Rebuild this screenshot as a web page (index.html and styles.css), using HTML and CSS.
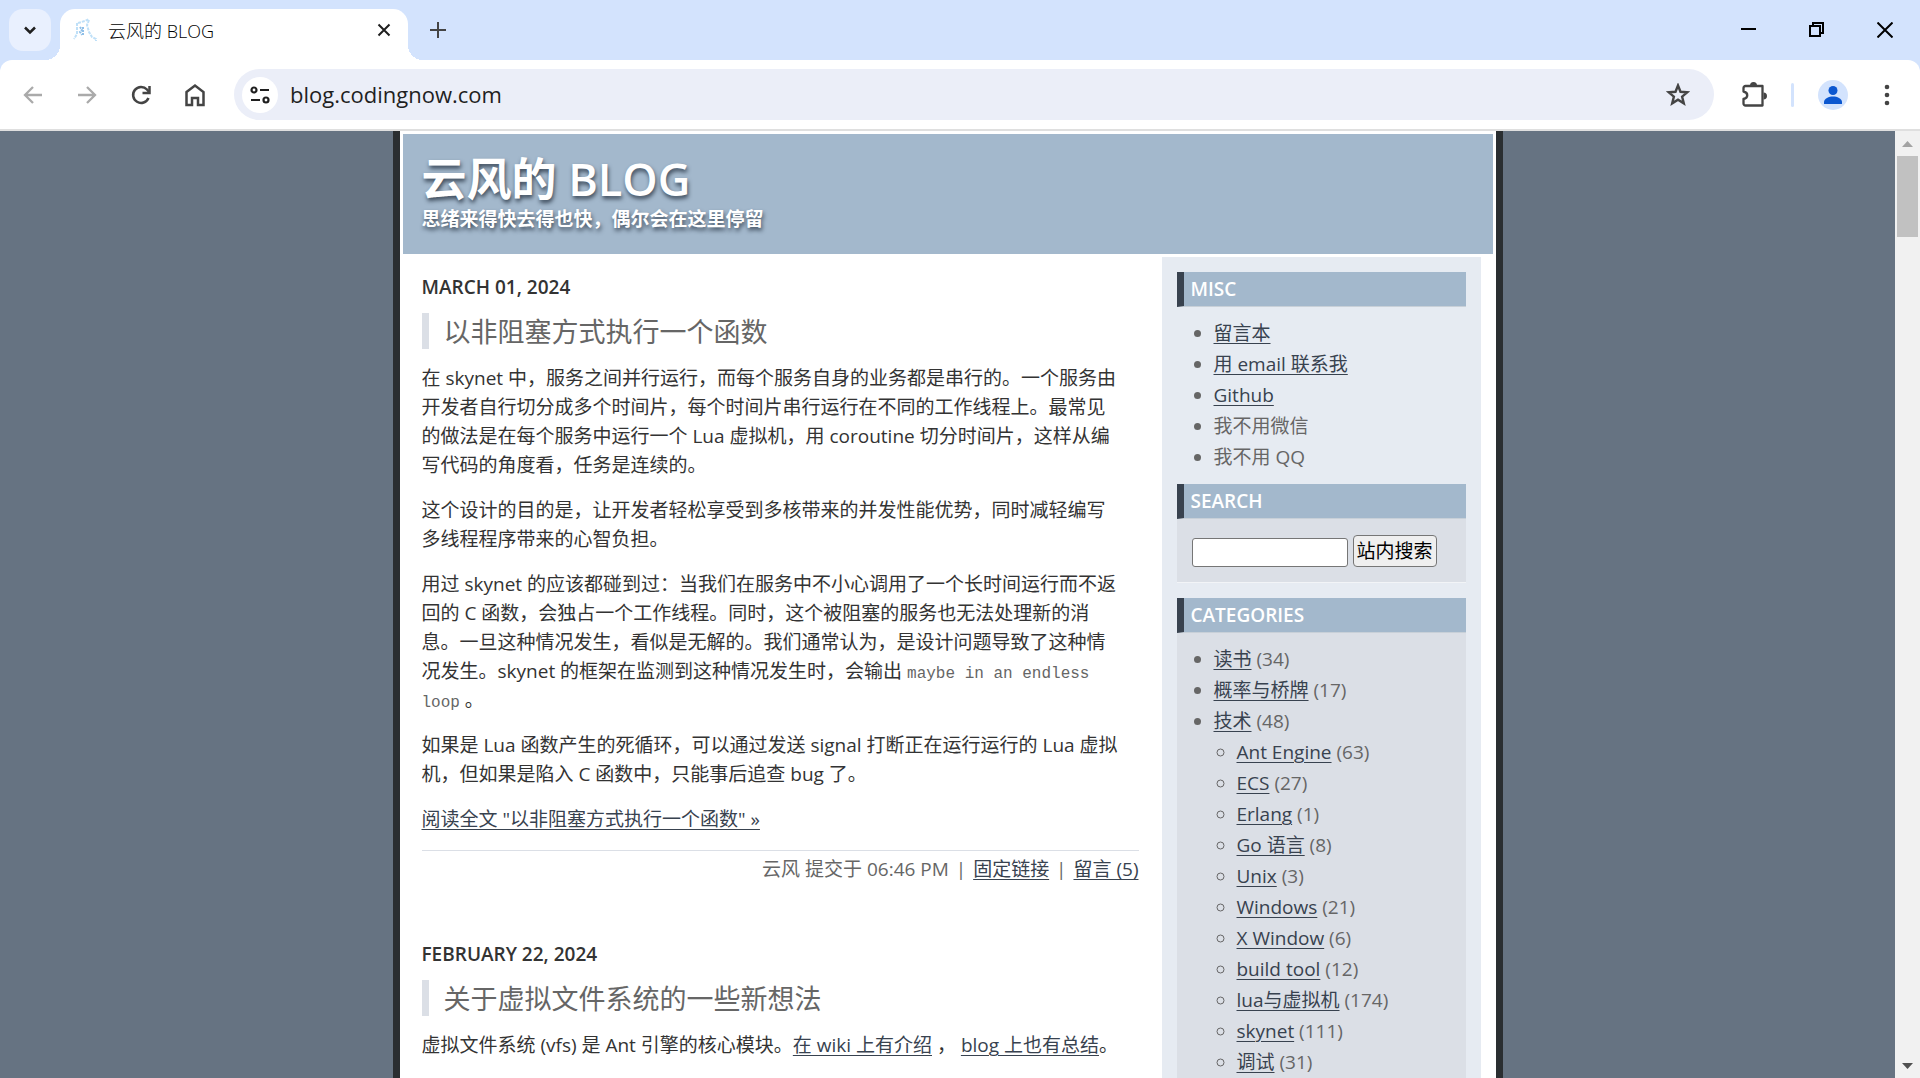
FILE: index.html
```html
<!DOCTYPE html>
<html lang="zh-CN">
<head>
<meta charset="utf-8">
<title>云风的 BLOG</title>
<link rel="stylesheet" href="styles.css">
</head>
<body>
<div class="tabstrip">
  <button class="tab-search" aria-label="Search tabs"><svg width="18" height="18" viewBox="0 0 18 18"><path d="M4 6.500l5 5 5-5" fill="none" stroke="#1f1f1f" stroke-width="2.500"/></svg></button>
  <div class="tab">
    <svg class="favicon" width="24" height="24" viewBox="0 0 24 24" fill="none"><path d="M4 5v11l-3 5M5 5l7-2 4-2M16 2l-2 5 2 7 3 5 4 2v2" stroke="#bfe0f8" stroke-width="2" stroke-dasharray="3 1"/><path d="M7 9l2 3-2 2 2 3M10 9v9" stroke="#8fbfe8" stroke-width="2" stroke-dasharray="2 1"/></svg>
    <span class="tab-title">云风的 BLOG</span>
    <button class="icon" aria-label="Close tab"><svg width="14" height="14" viewBox="0 0 14 14"><path d="M1.500 1.500l11 11M12.500 1.500l-11 11" stroke="#1f1f1f" stroke-width="2"/></svg></button>
  </div>
  <button class="icon new-tab" aria-label="New tab"><svg width="16" height="16" viewBox="0 0 16 16"><path d="M8 0v16M0 8h16" stroke="#444" stroke-width="2"/></svg></button>
  <div class="window-controls">
    <button class="icon" aria-label="Minimize"><svg width="16" height="16" viewBox="0 0 16 16"><path d="M0 7h15" stroke="#000" stroke-width="2"/></svg></button>
    <button class="icon" aria-label="Restore"><svg width="16" height="16" viewBox="0 0 16 16" fill="none" stroke="#000" stroke-width="2"><path d="M1 4h10v10H1zM4 4V1h10v10h-3"/></svg></button>
    <button class="icon" aria-label="Close"><svg width="16" height="16" viewBox="0 0 16 16"><path d="M.5.5l15 15M15.500.5l-15 15" stroke="#000" stroke-width="2"/></svg></button>
  </div>
</div>
<div class="toolbar">
  <button class="icon nav" aria-label="Back"><svg width="20" height="20" viewBox="0 0 20 20" fill="none" stroke="#aaa" stroke-width="2.300"><path d="M10 2l-8 8 8 8M2 10h17"/></svg></button>
  <button class="icon nav" aria-label="Forward"><svg width="20" height="20" viewBox="0 0 20 20" fill="none" stroke="#aaa" stroke-width="2.300"><path d="M10 2l8 8-8 8M18 10H1"/></svg></button>
  <button class="icon nav" aria-label="Reload"><svg width="22" height="22" viewBox="0 0 22 22" fill="none" stroke="#444" stroke-width="2.500"><path d="M18.500 14A8 8 0 1 1 17 5.500L19 8"/><path d="M19.500 2v7h-7"/></svg></button>
  <button class="icon nav" aria-label="Home"><svg width="22" height="24" viewBox="0 0 22 24" fill="none" stroke="#444" stroke-width="2.500"><path d="M2.500 9L11 2.500 19.500 9v13H14v-7H8v7H2.500z"/></svg></button>
  <div class="omnibox">
    <button class="site-info" aria-label="Site information"><svg width="20" height="18" viewBox="0 0 20 18" fill="none" stroke="#1f1f1f" stroke-width="2.200"><circle cx="4" cy="4" r="2.500"/><path d="M10 4h9M1 14h9"/><circle cx="16" cy="14" r="2.500"/></svg></button>
    <input class="url" type="text" aria-label="Address" value="blog.codingnow.com">
    <button class="icon" aria-label="Bookmark"><svg width="24" height="24" viewBox="0 0 24 24" fill="none" stroke="#444" stroke-width="2.400"><path d="M12 2.500l2.500 6.300 6.800.5-5.200 4.300 1.700 6.700-5.800-3.600-5.800 3.600 1.700-6.700L2.700 9.300l6.800-.5z"/></svg></button>
  </div>
  <button class="icon ext" aria-label="Extensions"><svg width="26" height="26" viewBox="0 0 26 26"><path d="M4.500 4h17v19.500h-17a2 2 0 0 1-2-2V17c5-1 5-6.500 0-7.500V6a2 2 0 0 1 2-2z" fill="none" stroke="#444" stroke-width="2.300" stroke-linejoin="round"/><path d="M9 3.500a3.500 3.500 0 0 1 7 0zM22.500 10.500a3.500 3.500 0 0 1 0 7z" fill="#444"/></svg></button>
  <span class="divider"></span>
  <button class="icon avatar" aria-label="Profile"><svg width="30" height="30" viewBox="0 0 30 30"><circle cx="15" cy="15" r="15" fill="#d3e3fd"/><circle cx="15" cy="10.500" r="4.500" fill="#0b57d0"/><path d="M6 24v-2c0-3.500 5-5.500 9-5.500s9 2 9 5.500v2z" fill="#0b57d0"/></svg></button>
  <button class="icon menu" aria-label="Menu"><svg width="6" height="24" viewBox="0 0 6 24" fill="#444"><circle cx="3" cy="4" r="2.300"/><circle cx="3" cy="12" r="2.300"/><circle cx="3" cy="20" r="2.300"/></svg></button>
</div>
<div class="viewport">
  <div class="page">
    <div class="container">
      <header class="banner">
        <h1>云风的 BLOG</h1>
        <p class="tagline">思绪来得快去得也快，偶尔会在这里停留</p>
      </header>
      <div class="columns">
        <main class="content">
          <article class="entry">
            <h2>March 01, 2024</h2>
            <h3>以非阻塞方式执行一个函数</h3>
            <div class="entry-body">
              <p>在 skynet 中，服务之间并行运行，而每个服务自身的业务都是串行的。一个服务由开发者自行切分成多个时间片，每个时间片串行运行在不同的工作线程上。最常见的做法是在每个服务中运行一个 Lua 虚拟机，用 coroutine 切分时间片，这样从编写代码的角度看，任务是连续的。</p>
              <p>这个设计的目的是，让开发者轻松享受到多核带来的并发性能优势，同时减轻编写多线程程序带来的心智负担。</p>
              <p>用过 skynet 的应该都碰到过：当我们在服务中不小心调用了一个长时间运行而不返回的 C 函数，会独占一个工作线程。同时，这个被阻塞的服务也无法处理新的消息。一旦这种情况发生，看似是无解的。我们通常认为，是设计问题导致了这种情况发生。skynet 的框架在监测到这种情况发生时，会输出 <code>maybe in an endless loop</code> 。</p>
              <p>如果是 Lua 函数产生的死循环，可以通过发送 signal 打断正在运行运行的 Lua 虚拟机，但如果是陷入 C 函数中，只能事后追查 bug 了。</p>
              <p><a href="#more">阅读全文 "以非阻塞方式执行一个函数" »</a></p>
            </div>
            <p class="posted">云风 提交于 06:46 PM <span class="sep">|</span> <a href="#permalink">固定链接</a> <span class="sep">|</span> <a href="#comments">留言 (5)</a></p>
          </article>
          <article class="entry">
            <h2>February 22, 2024</h2>
            <h3>关于虚拟文件系统的一些新想法</h3>
            <div class="entry-body">
              <p>虚拟文件系统 (vfs) 是 Ant 引擎的核心模块。<a href="#wiki">在 wiki 上有介绍</a> ， <a href="#blog">blog 上也有总结</a>。</p>
            </div>
          </article>
        </main>
        <aside class="sidebar">
          <section class="module">
            <h2>Misc</h2>
            <ul>
              <li><a href="#guestbook">留言本</a></li>
              <li><a href="#email">用 email 联系我</a></li>
              <li><a href="#github">Github</a></li>
              <li>我不用微信</li>
              <li>我不用 QQ</li>
            </ul>
          </section>
          <section class="module shaded">
            <h2>Search</h2>
            <form class="search">
              <input type="text" aria-label="站内搜索">
              <button type="button">站内搜索</button>
            </form>
          </section>
          <section class="module shaded">
            <h2>Categories</h2>
            <ul>
              <li><a href="#c1">读书</a> (34)</li>
              <li><a href="#c2">概率与桥牌</a> (17)</li>
              <li><a href="#c3">技术</a> (48)
                <ul>
                  <li><a href="#c4">Ant Engine</a> (63)</li>
                  <li><a href="#c5">ECS</a> (27)</li>
                  <li><a href="#c6">Erlang</a> (1)</li>
                  <li><a href="#c7">Go 语言</a> (8)</li>
                  <li><a href="#c8">Unix</a> (3)</li>
                  <li><a href="#c9">Windows</a> (21)</li>
                  <li><a href="#c10">X Window</a> (6)</li>
                  <li><a href="#c11">build tool</a> (12)</li>
                  <li><a href="#c12">lua与虚拟机</a> (174)</li>
                  <li><a href="#c13">skynet</a> (111)</li>
                  <li><a href="#c14">调试</a> (31)</li>
                </ul>
              </li>
            </ul>
          </section>
        </aside>
      </div>
    </div>
  </div>
  <div class="scrollbar">
    <svg width="25" height="25" viewBox="0 0 25 25"><path d="M7 16l5.500-6 5.500 6z" fill="#a3a3a3"/></svg>
    <div class="thumb"></div>
    <svg width="25" height="25" viewBox="0 0 25 25"><path d="M7 10l5.500 6 5.500-6z" fill="#505050"/></svg>
  </div>
</div>
</body>
</html>
```
FILE: styles.css
```css
* { box-sizing: border-box; }
body {
  margin: 0;
  height: 100vh;
  overflow: hidden;
  display: flex;
  flex-direction: column;
  background: #d3e3fd;
  font: 19px/29px "Open Sans", "Noto Sans CJK SC", sans-serif;
  color: #333;
}
h1, h2, h3, p, ul { margin: 0; padding: 0; }
a { color: #38424f; text-underline-offset: 3px; text-decoration-thickness: 1px; }
svg { display: block; flex: none; }

/* Browser frame */
.icon, .tab-search, .site-info {
  display: flex;
  align-items: center;
  justify-content: center;
  padding: 0;
  border: 0;
  background: none;
}
.tabstrip {
  flex: none;
  display: flex;
  align-items: center;
  height: 60px;
  padding: 0 27px 0 9px;
}
.tab-search {
  width: 42px;
  height: 42px;
  border-radius: 14px;
  background: #e9f0fe;
}
.tab {
  position: relative;
  align-self: flex-end;
  display: flex;
  align-items: center;
  gap: 11px;
  width: 348px;
  height: 51px;
  margin-left: 9px;
  padding: 0 17px 9px 13px;
  border-radius: 15px 15px 0 0;
  background: #fff;
}
.tab::before, .tab::after {
  content: "";
  position: absolute;
  bottom: 0;
  width: 15px;
  height: 15px;
}
.tab::before { right: 100%; background: radial-gradient(circle at 0 0, transparent 15px, #fff 15px); }
.tab::after { left: 100%; background: radial-gradient(circle at 100% 0, transparent 15px, #fff 15px); }
.tab-title {
  flex: 1;
  padding-top: 2px;
  font-size: 18px;
  font-weight: 300;
  color: #000;
}
.new-tab { margin-left: 22px; }
.window-controls { display: flex; gap: 52px; margin-left: auto; }
.toolbar {
  flex: none;
  display: flex;
  align-items: center;
  height: 71px;
  padding: 0 30px 0 6px;
  border-bottom: 2px solid #dfdfdf;
  border-radius: 12px 12px 0 0;
  background: #fff;
}
.nav { width: 54px; height: 42px; }
.omnibox {
  flex: 1;
  display: flex;
  align-items: center;
  height: 51px;
  margin-left: 12px;
  padding: 0 24px 0 8px;
  border-radius: 26px;
  background: #ebeef8;
}
.site-info {
  width: 36px;
  height: 36px;
  border-radius: 50%;
  background: #fff;
}
.url {
  flex: 1;
  padding: 0 12px 2px;
  border: 0;
  background: none;
  font: 22px/30px "Open Sans", sans-serif;
  color: #1f1f1f;
}
.ext { margin-left: 27px; }
.divider {
  width: 3px;
  height: 24px;
  margin: 0 24px;
  border-radius: 2px;
  background: #d3e3fd;
}
.menu { margin-left: 36px; }

/* Scrolling area */
.viewport {
  flex: 1;
  min-height: 0;
  display: flex;
  background: #667382;
}
.page { flex: 1; overflow: hidden; }
.scrollbar {
  width: 25px;
  display: flex;
  flex-direction: column;
  background: #f1f1f1;
}
.thumb {
  height: 81px;
  margin: 0 2px auto;
  background: #c1c1c1;
}

/* Blog */
.container {
  max-width: 1110px;
  margin: 0 auto;
  padding: 3px;
  border: solid #2a2e31;
  border-width: 0 7px;
  background: #fff;
}
.banner {
  height: 120px;
  padding: 19px;
  background: #a3b8cc;
  color: #fff;
  text-shadow: 1px 3px 4px #3c4a5a;
}
h1 { font-size: 45px; line-height: 52px; font-weight: 600; }
.tagline { font-weight: 700; }
.columns {
  display: flex;
  align-items: flex-start;
  justify-content: space-between;
  padding: 0 12px 0 19px;
}
.content { width: 717px; padding-top: 19px; }
.entry { margin-bottom: 56px; }
.entry h2 {
  margin-bottom: 11px;
  font-size: 19px;
  font-weight: 600;
  text-transform: uppercase;
}
.entry h3 {
  margin-bottom: 15px;
  padding: 2px 0 0 15px;
  border-left: 7px solid #dbdfe6;
  font-size: 27px;
  line-height: 34px;
  font-weight: 400;
  color: #666;
}
.entry-body { padding-right: 17px; }
.entry-body p { margin-bottom: 16px; }
code { font: 16px/16px "Liberation Mono", monospace; color: #666; }
.posted {
  padding-top: 4px;
  border-top: 1px solid #dbdfe6;
  text-align: right;
  color: #666;
}
.sep { margin: 0 2px; }
.sidebar {
  width: 319px;
  margin-top: 3px;
  padding: 15px;
  background: #e6ebf2;
  color: #666;
}
.module { padding-bottom: 11px; }
.module h2 {
  padding: 3px 7px 2px;
  border-left: 7px solid #38424f;
  border-bottom: 1px solid #c8d0d8;
  background: #a3b8cc;
  font-size: 19px;
  font-weight: 600;
  text-transform: uppercase;
  color: #fff;
}
.module ul { padding: 11px 0 0 37px; line-height: 31px; }
.module ul ul { padding: 0 0 0 23px; }
.shaded {
  margin-bottom: 15px;
  padding-bottom: 0;
  border-bottom: 1px solid #f2f4f7;
  background: #dbdfe6;
}
.shaded:last-child { padding-bottom: 15px; }
.search {
  display: flex;
  align-items: flex-end;
  gap: 5px;
  padding: 16px 15px 15px;
}
.search input {
  width: 156px;
  height: 29px;
  border: 1px solid #767676;
  border-radius: 3px;
  background: #fff;
}
.search button {
  width: 84px;
  height: 32px;
  padding: 0;
  border: 1px solid #767676;
  border-radius: 4px;
  background: #efefef;
  font: inherit;
  color: #000;
}
```
